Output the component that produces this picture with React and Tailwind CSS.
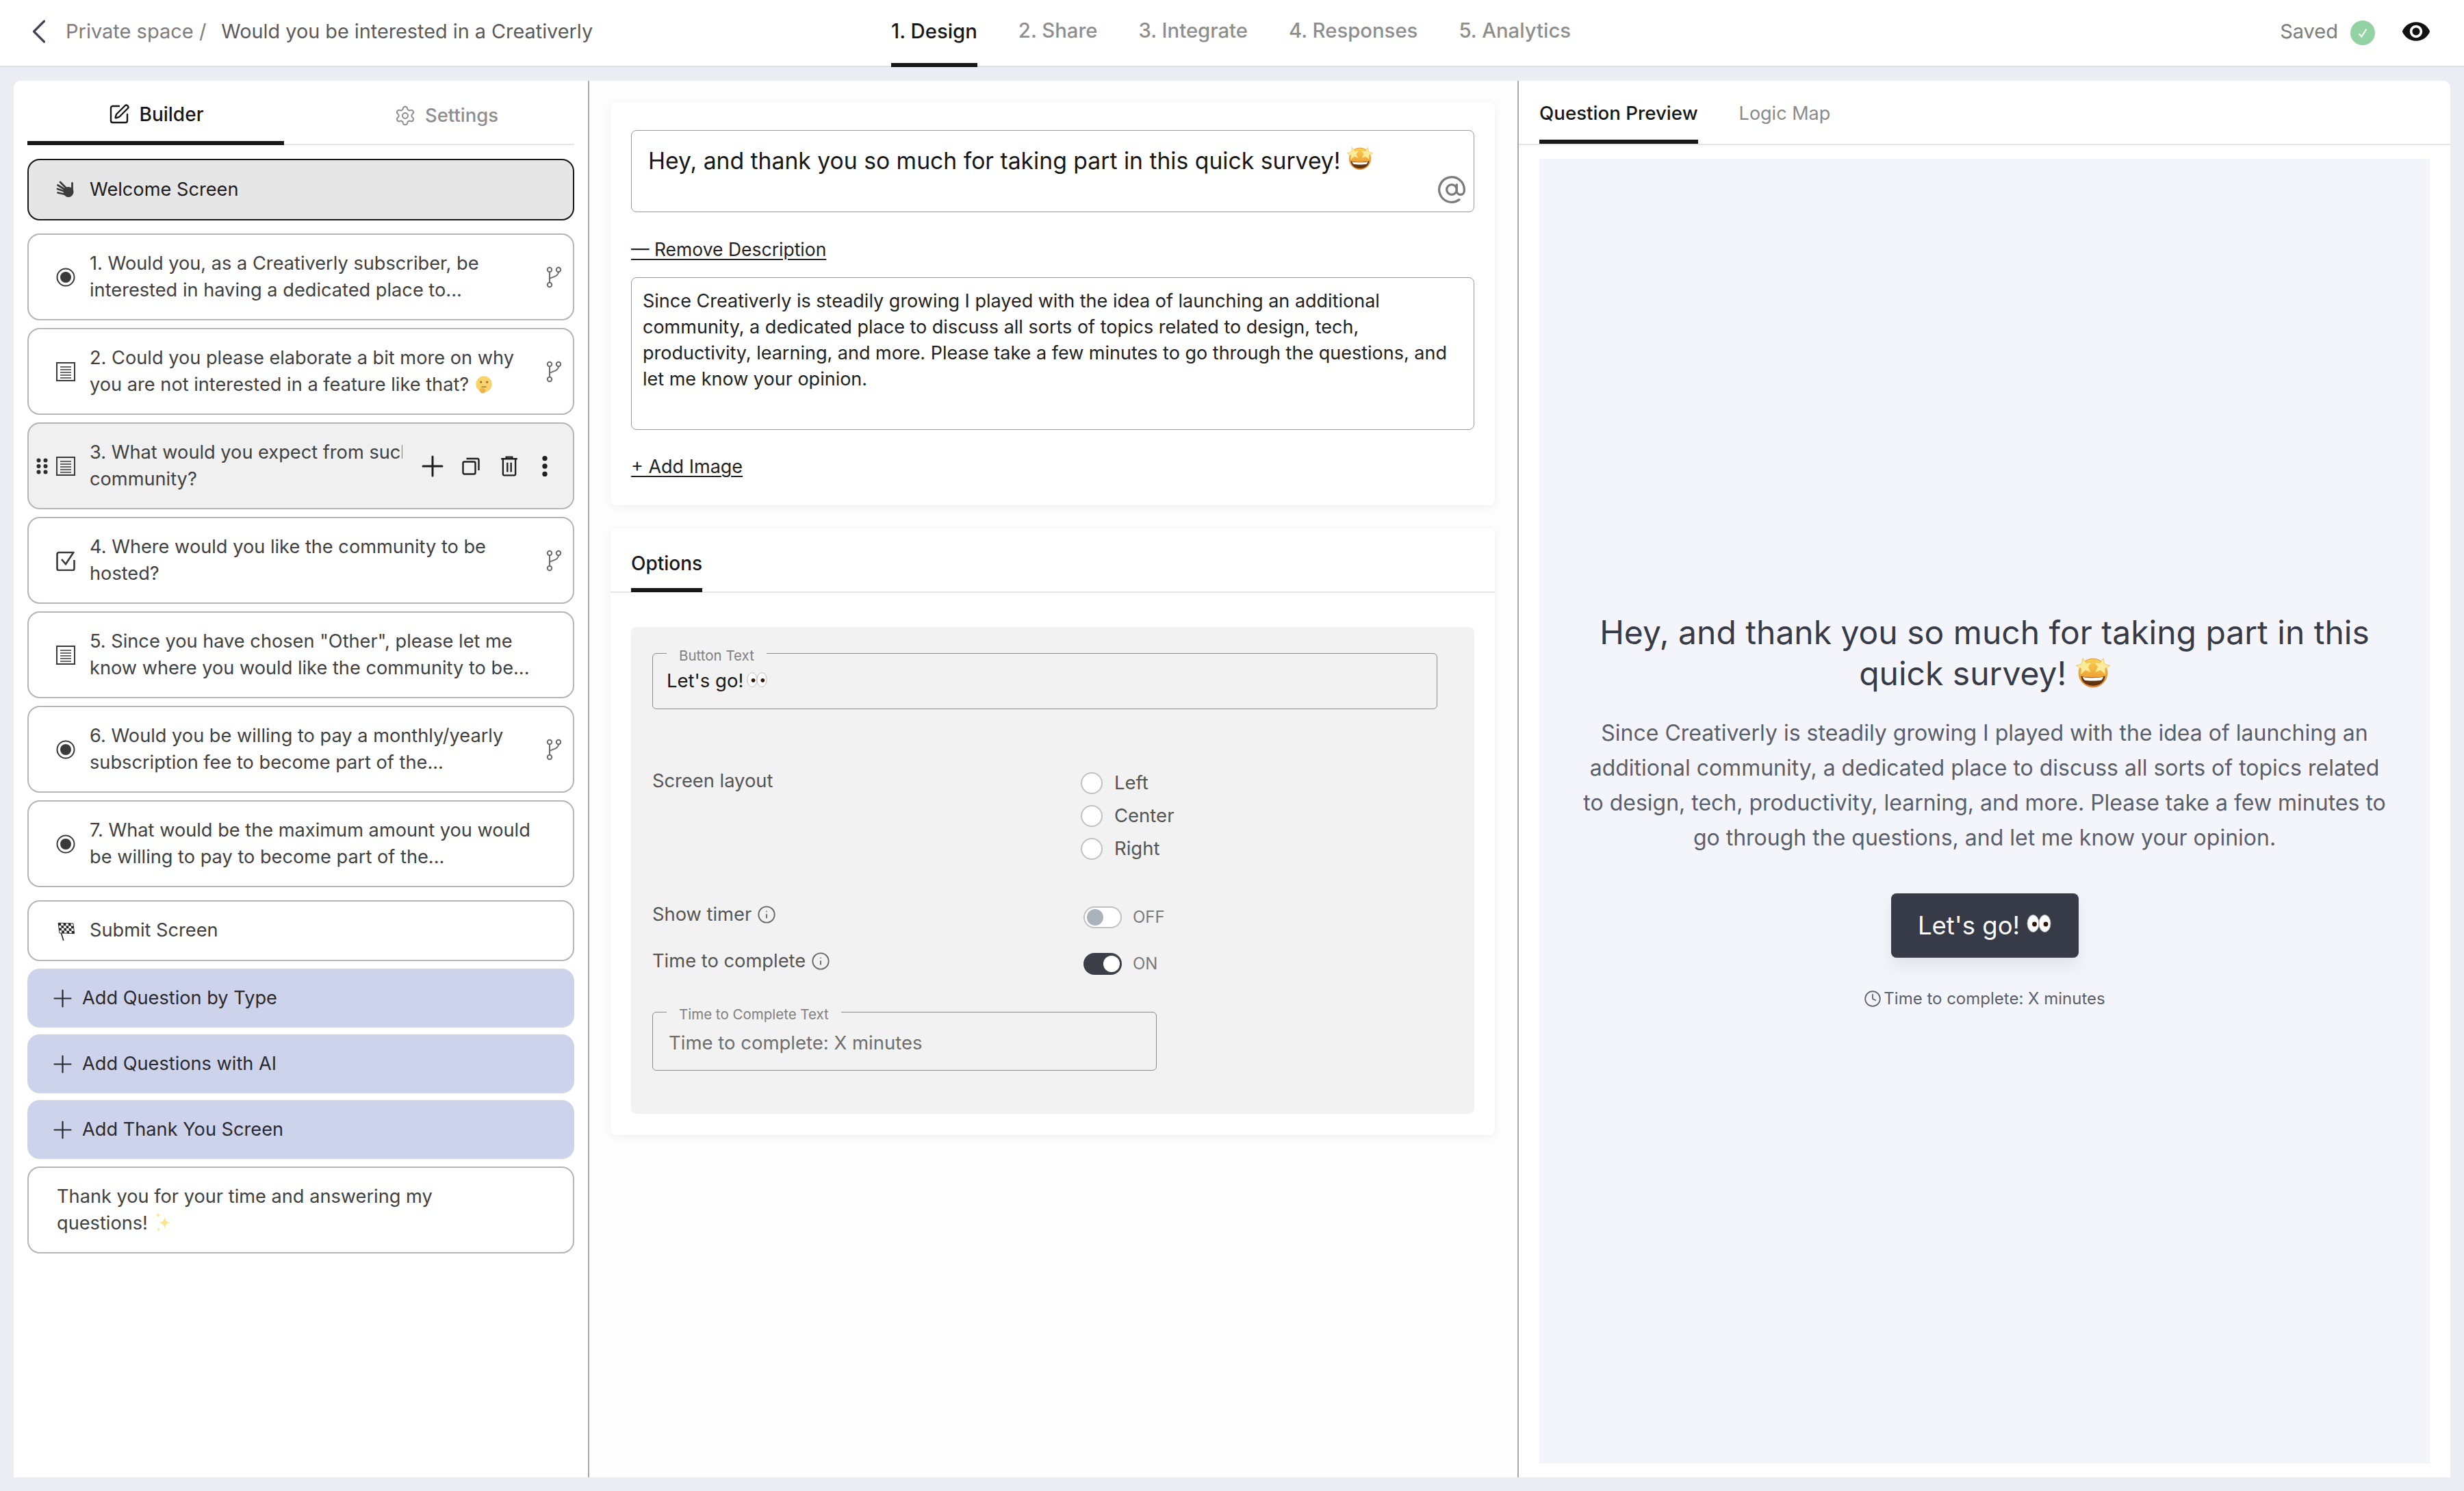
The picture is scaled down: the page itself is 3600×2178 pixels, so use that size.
import { ChevronLeft, SquarePen, Settings, Plus, AtSign, Info, Clock } from 'lucide-react';
import { MdVisibility } from 'react-icons/md';

const STEPS = ['1. Design', '2. Share', '3. Integrate', '4. Responses', '5. Analytics'];

const STAR = 'M0-12L3.2-4.45 11.4-3.7 5.2 1.7 7.05 9.700 0 5.500-7.05 9.700-5.2 1.7-11.4-3.7-3.2-4.45Z';

function StarStruck({ className }) {
  return (
    <svg viewBox="0 0 48 44" className={className}>
      <defs>
        <linearGradient id="ss" x1="0" y1="0" x2="0" y2="1">
          <stop offset="0" stopColor="#fbd24e" />
          <stop offset="1" stopColor="#e8872a" />
        </linearGradient>
      </defs>
      <circle cx="24" cy="23" r="20" fill="url(#ss)" stroke="#d97f24" strokeWidth=".8" />
      <path d="M7 27c5 3 29 3 34 0-1 9-8 14-17 14S8 36 7 27z" fill="#5f3413" />
      <path d="M9.500 28.500c7 1.800 22 1.800 29 0-.8 2.200-1.500 3.500-2.500 4.500-7 1.400-17 1.400-24 0-1-1-1.800-2.300-2.500-4.500z" fill="#fff" />
      <path d={STAR} transform="translate(12 14) rotate(-12)" fill="#fdeb9c" stroke="#e9c050" strokeWidth=".7" />
      <path d={STAR} transform="translate(36 14) rotate(12)" fill="#fdeb9c" stroke="#e9c050" strokeWidth=".7" />
    </svg>
  );
}

function Eyes({ className }) {
  return (
    <svg viewBox="0 0 36 26" className={className}>
      <ellipse cx="9.500" cy="13" rx="8.500" ry="12.500" fill="#fbfbfb" stroke="#b4b4b4" strokeWidth="1" />
      <ellipse cx="26.500" cy="13" rx="8.500" ry="12.500" fill="#fbfbfb" stroke="#b4b4b4" strokeWidth="1" />
      <circle cx="11.500" cy="14" r="3.400" fill="#2f1708" />
      <circle cx="28" cy="14" r="3.400" fill="#2f1708" />
    </svg>
  );
}

function Thinking({ className }) {
  return (
    <svg viewBox="0 0 36 36" className={className}>
      <circle cx="18" cy="17" r="15" fill="#f8d26a" />
      <circle cx="12.500" cy="13" r="2" fill="#8a6a2c" />
      <circle cx="24" cy="13" r="2" fill="#8a6a2c" />
      <path d="M14 22h8" stroke="#8a6a2c" strokeWidth="1.600" strokeLinecap="round" />
      <path d="M11 25c3-1 7-1 9 1 2 3 1 8-4 8s-7-5-5-9z" fill="#eeaf4c" />
    </svg>
  );
}

function Sparkles({ className }) {
  return (
    <svg viewBox="0 0 30 36" className={className} fill="#fbe58c">
      <path d="M18 8c1 7 3 9 10 10-7 1-9 3-10 10-1-7-3-9-10-10 7-1 9-3 10-10z" />
      <path d="M7 1c.4 3 1.400 4 4 4.500C8.400 6 7.400 7 7 10c-.4-3-1.400-4-4-4.500C5.600 5 6.600 4 7 1z" />
      <path d="M8 26c.3 2.200 1 3 3 3.400-2 .4-2.700 1.200-3 3.600-.3-2.400-1-3.200-3-3.600 2-.4 2.700-1.200 3-3.400z" />
    </svg>
  );
}

function WaveHand() {
  return (
    <svg viewBox="0 0 28 26" className="w-[28px] h-[26px] shrink-0" fill="#3c3c3c" stroke="#3c3c3c" strokeWidth="2.800" strokeLinecap="round">
      <ellipse cx="18" cy="16.500" rx="7.500" ry="7.500" stroke="none" />
      <path d="M6 2l10 10M2.500 6.500L14 13.500M2 12l12 4M2.500 17.500l11 2.500M23.500 3.500L23.500 14" />
    </svg>
  );
}

function FlagIcon() {
  const cells = [];
  for (let r = 0; r < 4; r++) {
    for (let c = 0; c < 6; c++) {
      if ((r + c) % 2 === 0) cells.push(<rect key={`${r}-${c}`} x={c * 3.4} y={r * 3.4} width="3.4" height="3.4" />);
    }
  }
  return (
    <svg viewBox="0 0 26 28" className="w-[28px] h-[30px] shrink-0">
      <path d="M3 4l7 23" stroke="#222" strokeWidth="1.500" fill="none" />
      <g transform="translate(3 3) skewY(8) rotate(-6)" fill="#222">
        <rect x="0" y="0" width="20.400" height="13.600" fill="#fff" stroke="#222" strokeWidth=".8" />
        {cells}
      </g>
    </svg>
  );
}

function RadioIcon() {
  return (
    <svg viewBox="0 0 28 28" className="w-[28px] h-[28px] shrink-0">
      <circle cx="14" cy="14" r="12.500" fill="none" stroke="#3a3a3a" strokeWidth="2" />
      <circle cx="14" cy="14" r="8" fill="#3a3a3a" />
    </svg>
  );
}

function TextIcon() {
  return (
    <svg viewBox="0 0 28 28" className="w-[28px] h-[28px] shrink-0" fill="none" stroke="#3a3a3a">
      <rect x="1" y="1" width="26" height="26" strokeWidth="2" />
      <path d="M6 7h16M6 11h16M6 15h16M6 19h16M6 23h16" strokeWidth="1.600" />
    </svg>
  );
}

function CheckIcon() {
  return (
    <svg viewBox="0 0 28 30" className="w-[28px] h-[30px] shrink-0" fill="none" stroke="#3a3a3a" strokeWidth="2.600">
      <path d="M24 3H4a2.500 2.500 0 0 0-2.500 2.500v21A2.500 2.500 0 0 0 4 29h20a2.500 2.500 0 0 0 2.500-2.500V14" />
      <path d="M8 13l6 7L26 2" />
    </svg>
  );
}

function BranchIcon() {
  return (
    <svg viewBox="0 0 22 32" className="absolute right-[17px] top-1/2 -translate-y-1/2 w-[22px] h-[32px]" fill="none" stroke="#6b6b6b" strokeWidth="2">
      <circle cx="5" cy="5" r="3.200" />
      <circle cx="18" cy="5" r="3.200" />
      <circle cx="5" cy="27" r="3.200" />
      <path d="M5 8v16M18 8c0 7-8 7-13 10" />
    </svg>
  );
}

function DragDots() {
  return (
    <svg viewBox="0 0 17 24" className="absolute left-[11px] top-1/2 -translate-y-1/2 w-[17px] h-[24px]" fill="#2c2c2c">
      <circle cx="3.500" cy="3.500" r="3" /><circle cx="13.500" cy="3.500" r="3" />
      <circle cx="3.500" cy="12" r="3" /><circle cx="13.500" cy="12" r="3" />
      <circle cx="3.500" cy="20.500" r="3" /><circle cx="13.500" cy="20.500" r="3" />
    </svg>
  );
}

function RowActions() {
  return (
    <div className="absolute left-[546px] right-[10px] top-[10px] bottom-[10px] bg-[#f0f0f0] flex items-center pl-[20px] text-[#1f1f1f]">
      <Plus className="w-[48px] h-[48px]" strokeWidth={1.500} />
      <svg viewBox="0 0 26 26" className="ml-[19px] w-[26px] h-[26px]" fill="none" stroke="currentColor" strokeWidth="2.400">
        <rect x="1.500" y="6.500" width="18" height="18" rx="2" />
        <path d="M6.500 2h16.500a2 2 0 0 1 1.500 2v15" />
      </svg>
      <svg viewBox="0 0 24 28" className="ml-[30px] w-[26px] h-[30px]" fill="none" stroke="currentColor" strokeWidth="2.200">
        <path d="M1 4h22M8 4V1.500h8V4M3.500 4v21a1.500 1.500 0 0 0 1.500 1.500h14a1.500 1.500 0 0 0 1.500-1.500V4M9.500 9v13M14.500 9v13" />
      </svg>
      <svg viewBox="0 0 8 28" className="ml-[34px] w-[10px] h-[32px]" fill="currentColor">
        <circle cx="4" cy="4" r="3.200" /><circle cx="4" cy="14" r="3.200" /><circle cx="4" cy="24" r="3.200" />
      </svg>
    </div>
  );
}

function QuestionCard({ icon, branch, hovered, children }) {
  return (
    <div className={`relative h-[127px] shrink-0 rounded-[18px] border-2 border-[#b5b5b5] flex items-center gap-[21px] pl-[40px] pr-[40px] text-[27.200px] leading-[38.500px] text-[#414141] ${hovered ? 'bg-[#f0f0f0]' : 'bg-white'}`}>
      {hovered && <DragDots />}
      <div className="w-[28px] flex justify-center shrink-0">{icon}</div>
      <div className="min-w-0">{children}</div>
      {branch && <BranchIcon />}
      {hovered && <RowActions />}
    </div>
  );
}

function AddRow({ children }) {
  return (
    <div className="h-[86px] shrink-0 rounded-[18px] bg-[#ced3ec] flex items-center gap-[8px] pl-[31px] text-[27.200px] text-[#2a2a2e]">
      <Plus className="w-[41px] h-[41px]" strokeWidth={1.300} />
      {children}
    </div>
  );
}

function BuilderPanel() {
  return (
    <div className="w-[841px] shrink-0 bg-white rounded-tl-[10px] border-r-2 border-[#a8a8a8] px-[20px] flex flex-col">
      <div className="h-[94px] shrink-0 flex border-b-2 border-[#e5e5e5] text-[28px] font-medium">
        <div className="w-[375px] flex items-center justify-center gap-[14px] pt-[10px] border-b-[6px] border-[#171717] -mb-[2px] text-[#171717]">
          <SquarePen className="w-[32px] h-[32px]" strokeWidth={1.800} />
          Builder
        </div>
        <div className="flex-1 flex items-center justify-center gap-[13px] pt-[10px] pl-[50px] text-[27.500px] text-[#8e8e8e]">
          <Settings className="w-[32px] h-[32px]" strokeWidth={1.500} />
          Settings
        </div>
      </div>
      <div className="mt-[20px] flex flex-col">
        <div className="h-[90px] rounded-[18px] border-2 border-[#171717] bg-[#e6e6e6] flex items-center gap-[21px] pl-[40px] text-[27.200px] text-[#1c1c1c] mb-[19px]">
          <WaveHand />
          Welcome Screen
        </div>
        <div className="flex flex-col gap-[11px]">
          <QuestionCard icon={<RadioIcon />} branch>1. Would you, as a Creativerly subscriber, be interested in having a dedicated place to...</QuestionCard>
          <QuestionCard icon={<TextIcon />} branch>
            2. Could you please elaborate a bit more on why you are not interested in a feature like that? <Thinking className="inline w-[28px] h-[28px] align-[-5px]" />
          </QuestionCard>
          <QuestionCard icon={<TextIcon />} hovered>3. What would you expect from such a<br />community?</QuestionCard>
          <QuestionCard icon={<CheckIcon />} branch>4. Where would you like the community to be hosted?</QuestionCard>
          <QuestionCard icon={<TextIcon />}>5. Since you have chosen "Other", please let me know where you would like the community to be...</QuestionCard>
          <QuestionCard icon={<RadioIcon />} branch>6. Would you be willing to pay a monthly/yearly subscription fee to become part of the...</QuestionCard>
          <QuestionCard icon={<RadioIcon />}>7. What would be the maximum amount you would be willing to pay to become part of the...</QuestionCard>
        </div>
        <div className="mt-[19px] h-[89px] rounded-[18px] border-2 border-[#b5b5b5] flex items-center gap-[21px] pl-[40px] text-[27.200px] text-[#414141]">
          <FlagIcon />
          Submit Screen
        </div>
        <div className="mt-[11px] flex flex-col gap-[10px]">
          <AddRow>Add Question by Type</AddRow>
          <AddRow>Add Questions with AI</AddRow>
          <AddRow>Add Thank You Screen</AddRow>
        </div>
        <div className="mt-[11px] h-[127px] rounded-[18px] border-2 border-[#b5b5b5] flex items-center pl-[41px] pr-[100px] text-[27.200px] leading-[38.500px] text-[#414141]">
          <div>Thank you for your time and answering my questions! <Sparkles className="inline w-[28px] h-[32px] align-[-6px]" /></div>
        </div>
      </div>
    </div>
  );
}

function Field({ label, value, className }) {
  return (
    <div className={`relative border-[1.500px] border-[#8c8c8c] rounded-[6px] ${className}`}>
      <span className="absolute -top-[10px] left-[20px] px-[18px] bg-[#f2f2f2] text-[20.500px] leading-[26px] text-[#808080]">{label}</span>
      {value}
    </div>
  );
}

function Radio({ label }) {
  return (
    <div className="h-[48px] flex items-center gap-[17px] text-[27.500px] text-[#555555]">
      <span className="w-[32px] h-[32px] rounded-full border-2 border-[#c2c2c2] bg-white" />
      {label}
    </div>
  );
}

function Toggle({ on }) {
  return (
    <div className="flex items-center gap-[16px] mt-[4px] -mb-[4px]">
      <span className={`w-[56px] h-[32px] rounded-full flex items-center px-[3px] ${on ? 'bg-[#3d3f48] justify-end' : 'bg-white border-2 border-[#c2c2c2]'}`}>
        <span className={`w-[24px] h-[24px] rounded-full ${on ? 'bg-white' : 'bg-[#aab2bc]'}`} />
      </span>
      <span className="text-[24px] text-[#7a7a7a]">{on ? 'ON' : 'OFF'}</span>
    </div>
  );
}

function EditorPanel() {
  return (
    <div className="w-[1358px] shrink-0 bg-[#fdfdfd] border-r-2 border-[#a8a8a8] pl-[31px] pr-[33px] pt-[31px] flex flex-col gap-[34px]">
      <div className="h-[589px] bg-white rounded-[8px] shadow-[0_2px_12px_rgba(0,0,0,0.06)] px-[30px] pt-[41px]">
        <div className="relative h-[120px] border-[1.500px] border-[#9a9a9a] rounded-[8px] pl-[24px] pt-[20px] text-[33.700px] leading-[48px] text-[#171717]">
          Hey, and thank you so much for taking part in this quick survey! <StarStruck className="inline w-[38px] h-[36px] align-[-2px]" />
          <AtSign className="absolute right-[10px] bottom-[10px] w-[44px] h-[44px] text-[#7b7b7b]" strokeWidth={1.800} />
        </div>
        <div className="mt-[36px] text-[26.500px] leading-[36px] text-[#222] underline underline-offset-[4px] w-fit">— Remove Description</div>
        <div className="mt-[23px] h-[223px] border-[1.500px] border-[#9a9a9a] rounded-[8px] pl-[16px] pr-[16px] pt-[15px] text-[27px] leading-[38px] text-[#222]">
          Since Creativerly is steadily growing I played with the idea of launching an additional community, a dedicated place to discuss all sorts of topics related to design, tech, productivity, learning, and more. Please take a few minutes to go through the questions, and let me know your opinion.
        </div>
        <div className="mt-[36px] text-[27px] leading-[36px] text-[#222] underline underline-offset-[4px] w-fit">+ Add Image</div>
      </div>
      <div className="h-[886px] bg-white rounded-[8px] shadow-[0_2px_12px_rgba(0,0,0,0.06)]">
        <div className="h-[94px] border-b-2 border-[#e5e5e5] px-[30px] flex">
          <div className="h-[93px] flex items-center pt-[14px] border-b-[6px] border-[#171717] text-[28px] font-medium text-[#171717]">Options</div>
        </div>
        <div className="mx-[30px] mt-[50px] h-[711px] rounded-[8px] bg-[#f2f2f2] px-[31px] pt-[38px]">
          <Field
            label="Button Text"
            className="w-[1147px] h-[82px] flex items-center pl-[20px] text-[27.500px] text-[#171717] gap-[5px]"
            value={<>Let's go! <Eyes className="w-[30px] h-[22px] -mt-[4px]" /></>}
          />
          <div className="mt-[84px] flex">
            <div className="w-[626px] text-[27.300px] leading-[48px] text-[#555555] -mt-[3px]">Screen layout</div>
            <div className="flex flex-col">
              <Radio label="Left" />
              <Radio label="Center" />
              <Radio label="Right" />
            </div>
          </div>
          <div className="mt-[52px] flex items-center">
            <div className="w-[630px] flex items-center gap-[8px] text-[27.300px] text-[#555555]">Show timer <Info className="w-[28px] h-[28px] text-[#666]" strokeWidth={1.600} /></div>
            <Toggle />
          </div>
          <div className="mt-[27px] flex items-center">
            <div className="w-[630px] flex items-center gap-[8px] text-[27.300px] text-[#555555]">Time to complete <Info className="w-[28px] h-[28px] text-[#666]" strokeWidth={1.600} /></div>
            <Toggle on />
          </div>
          <Field
            label="Time to Complete Text"
            className="mt-[53px] w-[737px] h-[86px] flex items-center pl-[23px] pt-[6px] text-[27.500px] text-[#6e6e6e]"
            value="Time to complete: X minutes"
          />
        </div>
      </div>
    </div>
  );
}

function PreviewPanel() {
  return (
    <div className="flex-1 bg-white rounded-tr-[10px] flex flex-col px-[30px]">
      <div className="-mx-[30px] px-[30px] h-[94px] shrink-0 border-b-2 border-[#e5e5e5] flex gap-[60px] text-[27.700px] font-medium">
        <div className="h-[92px] flex items-center pt-[10px] border-b-[6px] border-[#171717] text-[#171717]">Question Preview</div>
        <div className="flex items-center pt-[10px] pb-[6px] text-[27px] text-[#8a8a8a] font-normal">Logic Map</div>
      </div>
      <div className="mt-[20px] mb-[20px] flex-1 bg-[#f4f5fa] flex flex-col items-center justify-start pt-[662px] px-[60px] text-center">
        <h1 className="text-[48px] leading-[60px] text-[#373b47] font-normal">
          Hey, and thank you so much for taking part in this quick survey! <StarStruck className="inline w-[50px] h-[46px] align-[-4px]" />
        </h1>
        <p className="mt-[31px] text-[32px] leading-[51px] text-[#5b5f6b]">
          Since Creativerly is steadily growing I played with the idea of launching an additional community, a dedicated place to discuss all sorts of topics related to design, tech, productivity, learning, and more. Please take a few minutes to go through the questions, and let me know your opinion.
        </p>
        <div className="mt-[56px] w-[274px] h-[94px] rounded-[8px] bg-[#373b47] shadow-[0_12px_24px_rgba(0,0,0,0.08)] flex items-center justify-center gap-[10px] text-[36.500px] text-white">
          Let's go! <Eyes className="w-[36px] h-[26px] -mt-[6px]" />
        </div>
        <div className="mt-[42px] flex items-center gap-[3px] text-[24px] text-[#5b5f6b]">
          <Clock className="w-[26px] h-[26px]" strokeWidth={1.600} />
          Time to complete: X minutes
        </div>
      </div>
    </div>
  );
}

export default function App() {
  return (
    <div className="w-[3600px] h-[2178px] overflow-hidden bg-[#ebedf2] flex flex-col font-[Inter,sans-serif]">
      <header className="h-[98px] shrink-0 bg-white border-b-2 border-[#e0e0e0] flex items-center relative pl-[27px] pr-[48px] pb-[4px]">
        <ChevronLeft className="w-[60px] h-[60px] text-[#3f4450]" strokeWidth={1.300} />
        <span className="ml-[9px] text-[29px] text-[#7d7d7d]">Private space /</span>
        <span className="ml-[22px] text-[28.800px] text-[#5a5a5a]">Would you be interested in a Creativerly</span>
        <nav className="absolute left-[1302px] top-0 h-[98px] flex gap-[60px] text-[29.300px] font-medium text-[#8e8e8e]">
          {STEPS.map((s, i) => (
            <div key={s} className={`h-[98px] flex items-center ${i === 0 ? 'text-[#171717] border-b-[6px] border-[#171717]' : 'pb-[8px]'}`}>{s}</div>
          ))}
        </nav>
        <div className="ml-auto flex items-center text-[29px] text-[#7d7d7d]">
          Saved
          <span className="ml-[18px] w-[36px] h-[36px] rounded-full bg-[#93d2a3] flex items-center justify-center mt-[3px]">
            <svg viewBox="0 0 20 20" className="w-[22px] h-[22px]" fill="none" stroke="#fff" strokeWidth="2"><path d="M5 11l3.500 4L15 5" /></svg>
          </span>
          <MdVisibility className="ml-[38px] w-[44px] h-[44px] text-[#111]" />
        </div>
      </header>
      <main className="flex-1 min-h-0 flex px-[20px] pt-[20px] pb-[20px]">
        <BuilderPanel />
        <EditorPanel />
        <PreviewPanel />
      </main>
    </div>
  );
}
